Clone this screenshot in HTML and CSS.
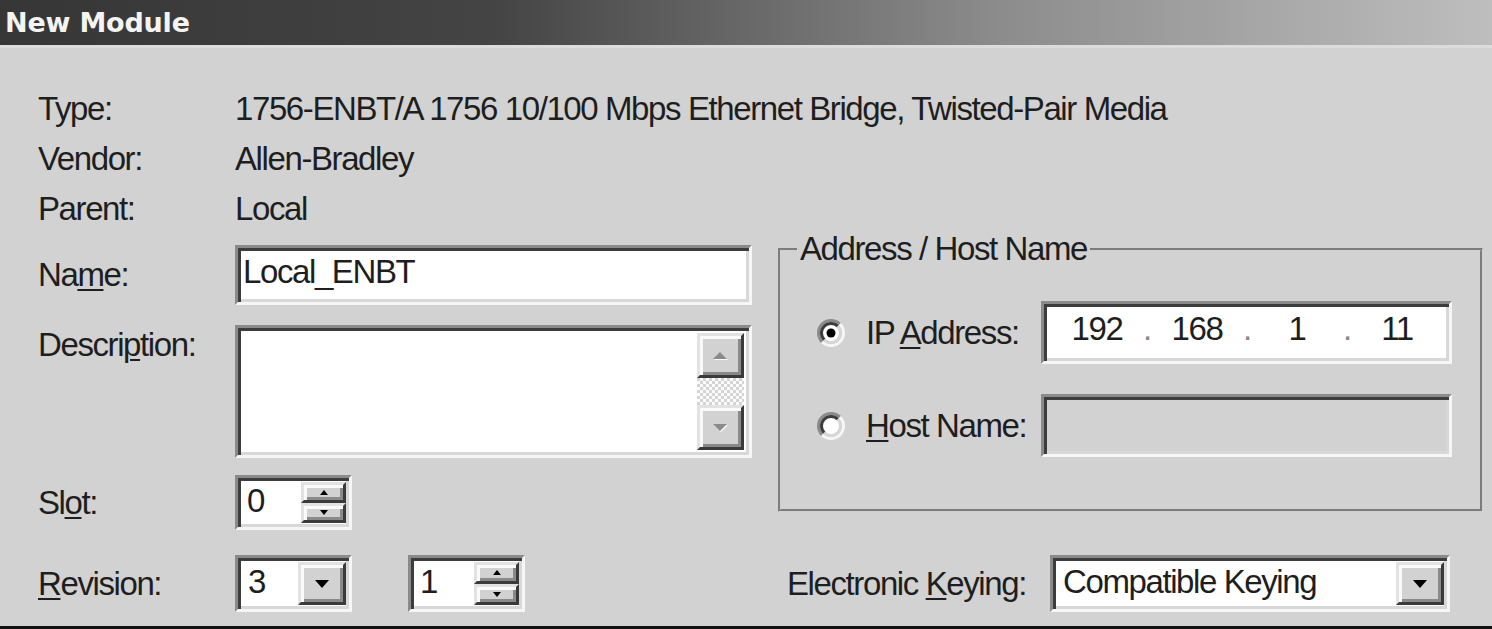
FILE: index.html
```html
<!DOCTYPE html>
<html lang="en">
<head>
<meta charset="utf-8">
<title>New Module</title>
<link rel="stylesheet" href="styles.css">
</head>
<body>
<div class="window">
  <div class="titlebar"><span class="title">New Module</span></div>
  <div class="content">
    <div class="info">
      <div class="info-row"><span class="label">Type:</span><span class="value">1756-ENBT/A 1756 10/100 Mbps Ethernet Bridge, Twisted-Pair Media</span></div>
      <div class="info-row"><span class="label">Vendor:</span><span class="value">Allen-Bradley</span></div>
      <div class="info-row"><span class="label">Parent:</span><span class="value">Local</span></div>
    </div>

    <div class="main">
      <div class="left">
        <div class="field-row row-name">
          <span class="label">Na<u>m</u>e:</span>
          <div class="sunken name-input">Local_ENBT</div>
        </div>
        <div class="field-row row-desc">
          <span class="label desc-label">Descri<u>p</u>tion:</span>
          <div class="sunken textarea">
            <div class="scrollbar">
              <div class="raised sb-btn">
                <svg width="18" height="11" viewBox="0 0 18 11"><path d="M2 10L9 3L16 10Z" fill="#fafafa"/><path d="M1 9L8 2L15 9Z" fill="#8a8a8a"/></svg>
              </div>
              <div class="sb-track"></div>
              <div class="raised sb-btn">
                <svg width="18" height="11" viewBox="0 0 18 11"><path d="M2 3H16L9 10Z" fill="#fafafa"/><path d="M1 2H15L8 9Z" fill="#8a8a8a"/></svg>
              </div>
            </div>
          </div>
        </div>
        <div class="field-row row-slot">
          <span class="label">Sl<u>o</u>t:</span>
          <div class="sunken spinner">
            <span class="spin-val">0</span>
            <div class="spin-btns">
              <div class="raised spin-btn"><svg width="8" height="5" viewBox="0 0 8 5"><path d="M4 0L8 5H0Z" fill="#000"/></svg></div>
              <div class="raised spin-btn"><svg width="8" height="5" viewBox="0 0 8 5"><path d="M0 0H8L4 5Z" fill="#000"/></svg></div>
            </div>
          </div>
        </div>
      </div>

      <fieldset class="group">
        <legend>Address / Host Name</legend>
        <div class="grp-row">
          <svg class="radio" width="28" height="28" viewBox="0 0 28 28">
            <circle cx="14" cy="14" r="9" fill="#fff"/>
            <path d="M5.16 22.84A12.5 12.5 0 0 1 22.84 5.16" fill="none" stroke="#8a8a8a" stroke-width="3"/>
            <path d="M22.84 5.16A12.5 12.5 0 0 1 5.16 22.84" fill="none" stroke="#f6f6f6" stroke-width="3"/>
            <path d="M7.28 20.72A9.5 9.5 0 0 1 20.72 7.28" fill="none" stroke="#3c3c3c" stroke-width="3"/>
            <path d="M20.72 7.28A9.5 9.5 0 0 1 7.28 20.72" fill="none" stroke="#d6d6d6" stroke-width="3"/>
            <circle cx="14" cy="14" r="4.5" fill="#000"/>
          </svg>
          <span class="grp-label">IP <u>A</u>ddress:</span>
          <div class="sunken ip-field">
            <span class="ip-seg">192</span><span class="ip-dot">.</span>
            <span class="ip-seg">168</span><span class="ip-dot">.</span>
            <span class="ip-seg">1</span><span class="ip-dot">.</span>
            <span class="ip-seg">11</span>
          </div>
        </div>
        <div class="grp-row row-host">
          <svg class="radio" width="28" height="28" viewBox="0 0 28 28">
            <circle cx="14" cy="14" r="9" fill="#fff"/>
            <path d="M5.16 22.84A12.5 12.5 0 0 1 22.84 5.16" fill="none" stroke="#8a8a8a" stroke-width="3"/>
            <path d="M22.84 5.16A12.5 12.5 0 0 1 5.16 22.84" fill="none" stroke="#f6f6f6" stroke-width="3"/>
            <path d="M7.28 20.72A9.5 9.5 0 0 1 20.72 7.28" fill="none" stroke="#3c3c3c" stroke-width="3"/>
            <path d="M20.72 7.28A9.5 9.5 0 0 1 7.28 20.72" fill="none" stroke="#d6d6d6" stroke-width="3"/>
          </svg>
          <span class="grp-label"><u>H</u>ost Name:</span>
          <div class="sunken host-field"></div>
        </div>
      </fieldset>
    </div>

    <div class="bottom">
      <div class="rev">
        <span class="label"><u>R</u>evision:</span>
        <div class="sunken combo rev-combo">
          <span class="combo-val">3</span>
          <div class="raised combo-btn"><svg width="14" height="8" viewBox="0 0 14 8"><path d="M0 0H14L7 8Z" fill="#000"/></svg></div>
        </div>
        <div class="sunken spinner rev-minor">
          <span class="spin-val">1</span>
          <div class="spin-btns">
            <div class="raised spin-btn"><svg width="8" height="5" viewBox="0 0 8 5"><path d="M4 0L8 5H0Z" fill="#000"/></svg></div>
            <div class="raised spin-btn"><svg width="8" height="5" viewBox="0 0 8 5"><path d="M0 0H8L4 5Z" fill="#000"/></svg></div>
          </div>
        </div>
      </div>
      <div class="keying">
        <span class="key-label">Electronic <u>K</u>eying:</span>
        <div class="sunken combo key-combo">
          <span class="combo-val">Compatible Keying</span>
          <div class="raised combo-btn"><svg width="14" height="8" viewBox="0 0 14 8"><path d="M0 0H14L7 8Z" fill="#000"/></svg></div>
        </div>
      </div>
    </div>
  </div>
</div>
</body>
</html>
```
FILE: styles.css
```css
html, body {
  margin: 0;
  padding: 0;
}
body {
  width: 1492px;
  height: 629px;
  overflow: hidden;
  background: #d2d2d2;
}
.window {
  height: 629px;
  box-sizing: border-box;
  border-bottom: 3px solid #111;
  background: #d2d2d2;
  font-family: "Liberation Sans", Arial, sans-serif;
  font-size: 33px;
  letter-spacing: -1.4px;
  color: #1e1e1e;
  white-space: nowrap;
}
.titlebar {
  height: 45px;
  display: flex;
  align-items: center;
  padding-left: 5px;
  background: linear-gradient(to right, #363636 0%, #444444 33%, #8c8c8c 67%, #bebebe 100%);
  border-bottom: 3px solid #dcdcdc;
}
.title {
  font-family: "DejaVu Sans", sans-serif;
  font-weight: bold;
  font-size: 27px;
  letter-spacing: -0.2px;
  color: #f4f4f4;
}
.content {
  padding: 36px 0 0 38px;
}
.info-row {
  display: flex;
  align-items: center;
  height: 50px;
}
.label {
  width: 197px;
  flex: none;
}
u {
  text-decoration-thickness: 2px;
  text-underline-offset: 3px;
}

/* classic 3D borders */
.sunken {
  box-sizing: border-box;
  border: 3px solid;
  border-color: #8a8a8a #f6f6f6 #f6f6f6 #8a8a8a;
  box-shadow: inset 3px 3px 0 #3c3c3c, inset -3px -3px 0 #d8d8d8;
  background: #fff;
}
.raised {
  box-sizing: border-box;
  background: #d2d2d2;
  border: 3px solid;
  border-color: #e2e2e2 #3a3a3a #3a3a3a #e2e2e2;
  box-shadow: inset 3px 3px 0 #fafafa, inset -3px -3px 0 #8a8a8a;
}

.main {
  display: flex;
}
.left {
  width: 714px;
  padding-top: 11px;
}
.field-row {
  display: flex;
}
.row-name {
  align-items: center;
}
.name-input {
  width: 517px;
  height: 60px;
  display: flex;
  align-items: center;
  padding: 0 0 6px 5px;
}
.row-desc {
  margin-top: 20px;
  align-items: flex-start;
}
.desc-label {
  line-height: 40px;
}
.textarea {
  width: 517px;
  height: 133px;
  display: flex;
  justify-content: flex-end;
  padding: 5px 5px 5px 0;
}
.scrollbar {
  width: 47px;
  display: flex;
  flex-direction: column;
  background-color: #fbfbfb;
  background-image: conic-gradient(#d4d4d4 25%, #fbfbfb 0 50%, #d4d4d4 0 75%, #fbfbfb 0);
  background-size: 6px 6px;
}
.sb-btn {
  height: 45px;
  display: flex;
  align-items: center;
  justify-content: center;
}
.sb-track {
  flex: 1;
}
.row-slot {
  margin-top: 17px;
  align-items: center;
}
.spinner {
  width: 117px;
  height: 55px;
  display: flex;
  padding: 4px 3px 4px 4px;
}
.spin-val {
  flex: 1;
  display: flex;
  align-items: center;
  padding: 0 0 4px 5px;
}
.spin-btns {
  width: 45px;
  display: flex;
  flex-direction: column;
}
.spin-btn {
  flex: 1;
  display: flex;
  align-items: center;
  justify-content: center;
}

/* group box */
.group {
  box-sizing: border-box;
  width: 705px;
  height: 278px;
  margin: 0 0 0 26px;
  padding: 37px 28px 0 36px;
  border: 3px groove #d0d0d0;
  min-width: 0;
}
.group legend {
  padding: 0 3px;
  margin-left: -20px;
  line-height: 30px;
}
.grp-row {
  display: flex;
  align-items: center;
}
.row-host {
  margin-top: 30px;
}
.radio {
  flex: none;
}
.grp-label {
  width: 175px;
  margin-left: 21px;
  flex: none;
}
.ip-field {
  width: 412px;
  height: 63px;
  display: flex;
  align-items: center;
  padding: 0 0 8px 13px;
}
.ip-seg {
  width: 80px;
  text-align: center;
}
.ip-dot {
  width: 20px;
  text-align: center;
  color: #888;
}
.host-field {
  width: 412px;
  height: 63px;
  background: #d2d2d2;
}

/* bottom row */
.bottom {
  display: flex;
  align-items: center;
  margin-top: 25px;
}
.rev {
  display: flex;
  align-items: center;
}
.combo {
  height: 57px;
  display: flex;
  padding: 4px 3px 4px 4px;
}
.combo-val {
  flex: 1;
  display: flex;
  align-items: center;
  padding: 0 0 4px 6px;
}
.combo-btn {
  width: 48px;
  display: flex;
  align-items: center;
  justify-content: center;
}
.rev-combo {
  width: 117px;
}
.rev-minor {
  margin-left: 56px;
  height: 57px;
}
.keying {
  display: flex;
  align-items: center;
  margin-left: 262px;
}
.key-label {
  width: 263px;
  flex: none;
}
.key-combo {
  width: 400px;
}
```
